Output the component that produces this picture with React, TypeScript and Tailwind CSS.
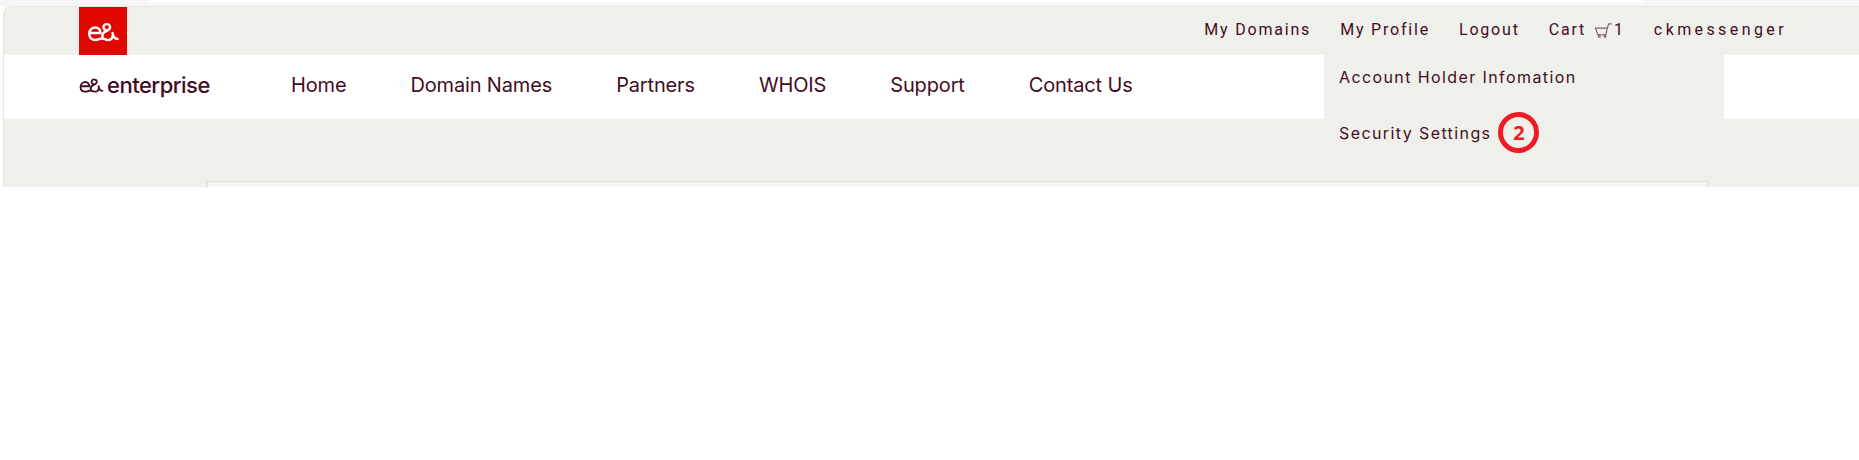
const ink = "text-[#430c24]";

const topLinks = ["My Domains", "My Profile", "Logout"];
const navLinks = ["Home", "Domain Names", "Partners", "WHOIS", "Support", "Contact Us"];

function EtisalatMark({ className }: { className?: string }) {
  return (
    <svg viewBox="0 0 32 22" fill="none" stroke="currentColor" strokeWidth="2.4" strokeLinecap="round" strokeLinejoin="round" className={className}>
      {/* e running on into the loop */}
      <path d="M1.5 12h11c.2-3-2-5.5-5.2-5.5S1.2 9 1.2 12.8 3.8 19 7.5 19c2.8 0 4-1.5 6.5-1.5 2.5 0 3.5 1.5 6 1.5 2.8 0 4.5-1.5 5-5" />
      <path d="M19 9.5c-2.5-.3-3.8-2-3.5-3.8.4-2 2.3-2.9 4-2.5 1.9.4 3 2 2.5 3.8-.6 2-3 3-5 3.8-2.300 1-3 3-2.500 5.500" />
      <path d="M24.5 12c.4 3.5 2.2 5.5 5 6" />
    </svg>
  );
}

function CartIcon() {
  return (
    <svg viewBox="0 0 18 16" fill="none" stroke="#7d5a68" strokeWidth="1.2" className="ml-[9px] mr-[2px] h-[17px] w-[17px]">
      <path d="M0.5 5.5h12.5l-1.5 7h-8.5z" />
      <path d="M13 5.5l1.5-4.5h3" />
      <circle cx="4.5" cy="14.2" r="1" />
      <circle cx="10.5" cy="14.2" r="1" />
    </svg>
  );
}

export default function App() {
  return (
    <div className="relative h-[460px] w-[1859px] overflow-hidden bg-white font-['Inter','Liberation_Sans',sans-serif]">
      {/* Sliver of the previous screen at the very top */}
      <div className="flex h-[6px] bg-[#f6f6f6]">
        <div className="ml-[148px] h-[3px] w-[1497px] rounded-b-lg bg-white" />
      </div>

      {/* Page shell */}
      <div className="ml-[3px] h-[181px] rounded-tl-lg border-l border-t border-[#e6e6e4] bg-[#f0f0ea]">
        {/* Top bar */}
        <div className="flex h-[48px] items-center justify-between pl-[75px] pr-[72px]">
          <div className="h-[48px] w-[48px] bg-[#e00800] p-[8px] text-white">
            <EtisalatMark className="ml-[1px] mt-[6px] h-[22px] w-[32px]" />
          </div>
          <div className={`mb-[2px] flex items-center gap-[29px] font-['Roboto','Liberation_Sans',sans-serif] text-[16px] tracking-[1.8px] ${ink}`}>
            {topLinks.map((link) => (
              <span key={link}>{link}</span>
            ))}
            <span className="flex items-center">
              Cart
              <CartIcon />
              1
            </span>
            <span className="tracking-[3.4px]">ckmessenger</span>
          </div>
        </div>

        {/* Main nav */}
        <div className="flex h-[64px] items-center bg-white pb-[4px] pl-[75px]">
          <div className={`flex w-[212px] items-center gap-[2px] ${ink}`}>
            <EtisalatMark className="h-[17px] w-[26px]" />
            <span className="text-[22px] font-medium leading-none tracking-[-0.5px]">enterprise</span>
          </div>
          <nav className={`flex items-center gap-[64px] text-[20px] tracking-[-0.15px] ${ink}`}>
            {navLinks.map((link) => (
              <span key={link}>{link}</span>
            ))}
          </nav>
        </div>

        {/* Grey band with the card edge */}
        <div className="flex h-[68px] items-end pl-[203px]">
          <div className="h-[6px] w-[1501px] border-l border-r border-t border-[#dedfda] bg-[#f5f5f5]" />
        </div>
      </div>

      {/* Profile dropdown */}
      <div className={`absolute left-[1324px] top-[55px] h-[125px] w-[400px] bg-[#f0f0ea] pl-[15px] text-[16px] tracking-[1.4px] ${ink}`}>
        <div className="flex h-[44px] items-center">Account Holder Infomation</div>
        <div className="mt-[13px] flex items-center">
          Security Settings
          <span className="ml-[7px] flex h-[41px] w-[41px] items-center justify-center rounded-full border-[5px] border-[#ed1c24] font-['Open_Sans',sans-serif] text-[20px] font-bold tracking-normal text-[#ed1c24]">
            2
          </span>
        </div>
      </div>
    </div>
  );
}
